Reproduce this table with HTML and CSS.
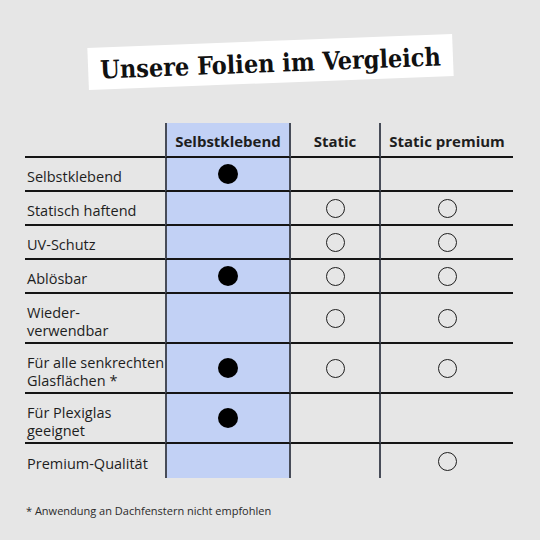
FILE: index.html
```html
<!DOCTYPE html>
<html>
<head>
  <title>Unsere Folien im Vergleich</title>
  <link rel="stylesheet" href="styles.css">
</head>
<body>
  <div class="page">
    <div class="title-wrap">
      <h1 class="title">Unsere Folien im Vergleich</h1>
    </div>

    <div class="compare">
      <div class="cell head"></div>
      <div class="cell head sel">Selbstklebend</div>
      <div class="cell head mid">Static</div>
      <div class="cell head">Static premium</div>

      <div class="cell label">Selbstklebend</div>
      <div class="cell sel"><span class="dot"></span></div>
      <div class="cell mid"></div>
      <div class="cell"></div>

      <div class="cell label">Statisch haftend</div>
      <div class="cell sel"></div>
      <div class="cell mid"><span class="ring"></span></div>
      <div class="cell"><span class="ring"></span></div>

      <div class="cell label">UV-Schutz</div>
      <div class="cell sel"></div>
      <div class="cell mid"><span class="ring"></span></div>
      <div class="cell"><span class="ring"></span></div>

      <div class="cell label">Ablösbar</div>
      <div class="cell sel"><span class="dot"></span></div>
      <div class="cell mid"><span class="ring"></span></div>
      <div class="cell"><span class="ring"></span></div>

      <div class="cell label tall">Wieder-<br>verwendbar</div>
      <div class="cell sel tall"></div>
      <div class="cell mid tall"><span class="ring"></span></div>
      <div class="cell tall"><span class="ring"></span></div>

      <div class="cell label tall">Für alle senkrechten Glasflächen *</div>
      <div class="cell sel tall"><span class="dot"></span></div>
      <div class="cell mid tall"><span class="ring"></span></div>
      <div class="cell tall"><span class="ring"></span></div>

      <div class="cell label tall">Für Plexiglas<br>geeignet</div>
      <div class="cell sel tall"><span class="dot"></span></div>
      <div class="cell mid tall"></div>
      <div class="cell tall"></div>

      <div class="cell label last">Premium-Qualität</div>
      <div class="cell sel last"></div>
      <div class="cell mid last"></div>
      <div class="cell last"><span class="ring"></span></div>
    </div>

    <p class="note">* Anwendung an Dachfenstern nicht empfohlen</p>
  </div>
</body>
</html>
```

FILE: styles.css
```css
body {
  margin: 0;
  padding: 0;
  background: #e6e6e6;
  font-family: "Open Sans", Arial, sans-serif;
  color: #1e1e1e;
}

.page {
  width: 540px;
  height: 540px;
  padding-top: 41px;
  box-sizing: border-box;
}

.title-wrap {
  display: flex;
  justify-content: center;
  margin-bottom: 40px;
}

.title {
  margin: 0;
  width: 365px;
  height: 42px;
  background: #fff;
  display: flex;
  justify-content: center;
  align-items: center;
  font-family: "DejaVu Serif Condensed", "DejaVu Serif", serif;
  font-stretch: condensed;
  font-weight: 700;
  font-size: 25px;
  color: #111;
  padding-top: 2px;
  box-sizing: border-box;
  transform: rotate(-2.2deg);
}

.compare {
  display: grid;
  grid-template-columns: 140px 126px 90px 132px;
  margin-left: 25px;
}

.cell {
  box-sizing: border-box;
  height: 34px;
  border-bottom: 2px solid #151515;
  display: flex;
  justify-content: center;
  align-items: center;
  font-size: 14.5px;
  line-height: 18px;
}

.head {
  height: 35px;
  font-weight: 700;
  font-size: 15px;
  padding-top: 2px;
}

.label {
  justify-content: flex-start;
  padding-left: 2px;
  padding-top: 6px;
}

.tall {
  height: 50px;
}

.label.tall {
  padding-top: 8px;
}

.last {
  border-bottom: none;
}

.sel {
  background: #c2d1f5;
  border-left: 2px solid #474c58;
  border-right: 2px solid #474c58;
}

.mid {
  border-right: 2px solid #474c58;
}

.dot {
  width: 20px;
  height: 20px;
  border-radius: 50%;
  background: #000;
}

.ring {
  width: 17px;
  height: 17px;
  border-radius: 50%;
  border: 1.5px solid #1e1e1e;
}

.note {
  margin: 25px 0 0 26px;
  font-size: 11px;
  line-height: 15px;
  color: #2a2a2a;
}
```
